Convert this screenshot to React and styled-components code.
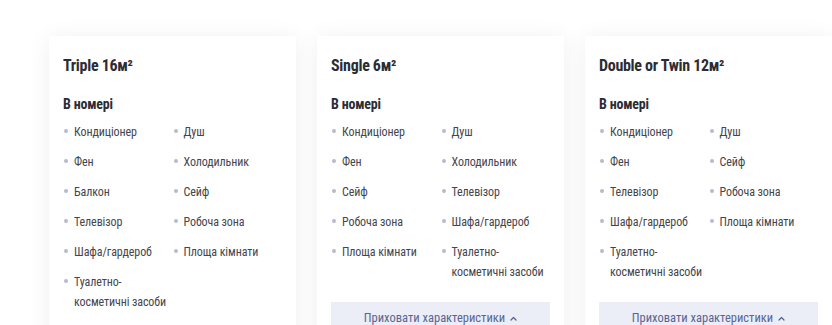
import React from 'react';
import styled, { createGlobalStyle } from 'styled-components';

const GlobalStyle = createGlobalStyle`
  body {
    margin: 0;
    background: #ffffff;
    font-family: "Roboto Condensed", Roboto, "Liberation Sans", sans-serif;
    overflow: hidden;
  }
`;

const StyledPage = styled.div`
  display: flex;
  align-items: flex-start;
  gap: 21px;
  padding: 36px 0 0 49px;
  width: 832px;
  height: 325px;
  box-sizing: border-box;
  overflow: hidden;
`;

const StyledCard = styled.div`
  flex: 0 0 247px;
  box-sizing: border-box;
  padding: 20px 14px 20px 14px;
  background: #ffffff;
  box-shadow: 0 2px 22px rgba(0, 0, 0, 0.065);
`;

const StyledTitle = styled.h3`
  margin: 0;
  font-size: 16px;
  line-height: 20px;
  font-weight: 700;
  letter-spacing: -0.3px;
  color: #2c2c34;
  white-space: nowrap;
`;

const StyledSection = styled.h4`
  margin: 19px 0 0 0;
  font-size: 14px;
  line-height: 18px;
  font-weight: 700;
  letter-spacing: -0.2px;
  color: #2c2c34;
`;

const StyledColumns = styled.div`
  display: grid;
  grid-template-columns: 1fr 1fr;
  margin-top: 9px;
`;

const StyledList = styled.ul`
  display: flex;
  flex-direction: column;
  gap: 10px;
  margin: 0;
  padding: 0;
  list-style: none;
`;

const StyledItem = styled.li`
  position: relative;
  padding: 0 6px 0 11px;
  font-size: 12px;
  line-height: 20px;
  letter-spacing: -0.1px;
  color: #45454d;

  &::before {
    content: '';
    position: absolute;
    left: 1px;
    top: 7px;
    width: 4px;
    height: 4px;
    border-radius: 50%;
    background: #b9bacb;
  }
`;

const StyledButton = styled.button`
  display: flex;
  justify-content: center;
  align-items: center;
  gap: 5px;
  width: 100%;
  height: 32px;
  margin-top: 20px;
  padding: 0;
  border: none;
  background: #eceef7;
  color: #5a6494;
  font-family: inherit;
  font-size: 12.5px;
  line-height: 32px;
  cursor: pointer;
`;

const rooms = [
  {
    title: 'Triple 16м²',
    columns: [
      ['Кондиціонер', 'Фен', 'Балкон', 'Телевізор', 'Шафа/гардероб', 'Туалетно-косметичні засоби'],
      ['Душ', 'Холодильник', 'Сейф', 'Робоча зона', 'Площа кімнати'],
    ],
  },
  {
    title: 'Single 6м²',
    columns: [
      ['Кондиціонер', 'Фен', 'Сейф', 'Робоча зона', 'Площа кімнати'],
      ['Душ', 'Холодильник', 'Телевізор', 'Шафа/гардероб', 'Туалетно-косметичні засоби'],
    ],
  },
  {
    title: 'Double or Twin 12м²',
    columns: [
      ['Кондиціонер', 'Фен', 'Телевізор', 'Шафа/гардероб', 'Туалетно-косметичні засоби'],
      ['Душ', 'Сейф', 'Робоча зона', 'Площа кімнати'],
    ],
  },
];

function ChevronUp() {
  return (
    <svg width="7" height="5" viewBox="0 0 7 5" fill="none">
      <path d="M1 4L3.5 1.5L6 4" stroke="currentColor" strokeWidth="1.3" strokeLinecap="round" strokeLinejoin="round" />
    </svg>
  );
}

function RoomCard({ room }) {
  return (
    <StyledCard>
      <StyledTitle>{room.title}</StyledTitle>
      <StyledSection>В номері</StyledSection>
      <StyledColumns>
        {room.columns.map((column, i) => (
          <StyledList key={i}>
            {column.map(item => (
              <StyledItem key={item}>{item}</StyledItem>
            ))}
          </StyledList>
        ))}
      </StyledColumns>
      <StyledButton type="button">
        Приховати характеристики
        <ChevronUp />
      </StyledButton>
    </StyledCard>
  );
}

export default function App() {
  return (
    <>
      <GlobalStyle />
      <StyledPage>
        {rooms.map(room => (
          <RoomCard key={room.title} room={room} />
        ))}
      </StyledPage>
    </>
  );
}
